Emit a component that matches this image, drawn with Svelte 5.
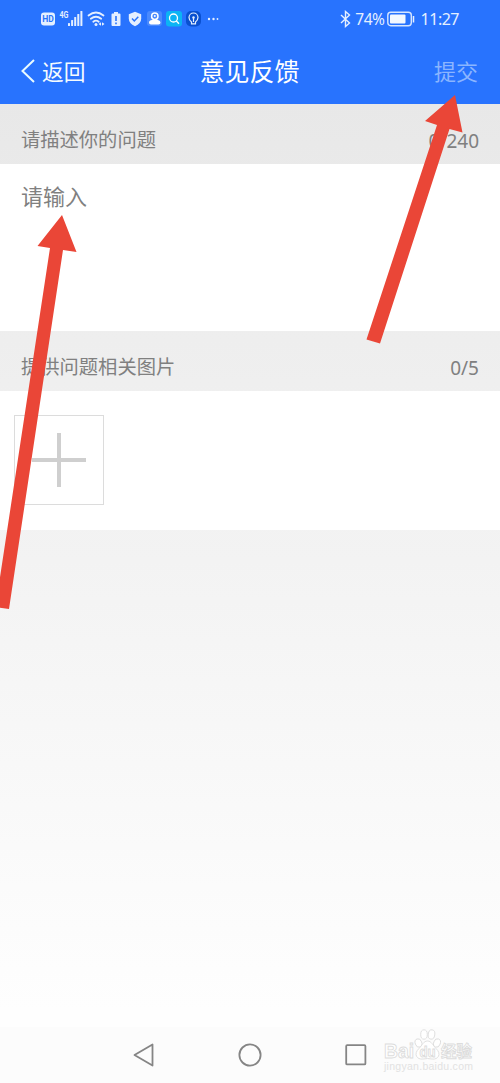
<script>
  let description = $state('');
  let photos = $state([]);

  const maxLength = 240;
  const maxPhotos = 5;
  const signalBars = [3, 6, 9, 12, 15];
</script>

<div class="screen">
  <header>
    <div class="status">
      <svg class="status-left" width="182" height="24" viewBox="0 0 182 24">
        <rect x="1" y="6.500" width="14" height="13" rx="3" fill="#e4efff" />
        <text x="8" y="16.300" class="hd">HD</text>
        <text x="19.500" y="11.500" class="net" textLength="9" lengthAdjust="spacingAndGlyphs">4G</text>
        {#each signalBars as h, i}
          <rect x={28 + i * 3.1} y={20 - h} width="2" height={h} rx="0.5" fill="#e4efff" />
        {/each}
        <g fill="none" stroke="#e4efff" stroke-width="1.800" stroke-linecap="round">
          <path d="M48.500 9.500Q56 3.500 63.500 9.500" />
          <path d="M50.800 12.800Q56 8.700 61.200 12.800" />
          <path d="M53.300 15.700Q56 13.700 58.700 15.700" />
        </g>
        <circle cx="56" cy="18.500" r="1.500" fill="#e4efff" />
        <path d="M58.500 18l2.500-1.800v3.600zM64.500 18l-2.500-1.800v3.600z" fill="#e4efff" />
        <path d="M74 6h4v1.500h1.500q1 0 1 1V19q0 1-1 1h-7q-1 0-1-1V8.500q0-1 1-1H74z" fill="#e4efff" />
        <path d="M76 10v5M76 16.500v1.700" stroke="#2873fb" stroke-width="1.600" />
        <path d="M95 5.800l6.200 2.400v4.300q0 5-6.200 7.800q-6.200-2.800-6.200-7.800V8.200z" fill="#e4efff" />
        <path d="M92 12.500l2.300 2.400 4-4.200" fill="none" stroke="#2873fb" stroke-width="1.500" />
        <rect x="107" y="5" width="15" height="15" rx="3" fill="#4a8afd" />
        <circle cx="114.800" cy="10.200" r="3.200" fill="none" stroke="#fff" stroke-width="1.500" />
        <circle cx="114.800" cy="10" r="1" fill="#fff" />
        <path d="M111 18.500q-2 0-2-2t3-2.500l3-1 3 1q2.500.5 2.500 2.500t-2 2z" fill="#fff" />
        <rect x="126" y="5" width="16" height="15.500" rx="3" fill="#0cb4f4" />
        <circle cx="133.500" cy="12" r="4" fill="none" stroke="#fff" stroke-width="1.300" />
        <path d="M136.400 15l2.600 2.700" stroke="#fff" stroke-width="1.300" />
        <rect x="146" y="5" width="15" height="15.500" rx="5" fill="#0950d0" />
        <path d="M151.500 16q-2.500-2-2.500-4.500a4.500 4.500 0 0 1 9 0q0 2.500-2.500 4.500v1.800h-4zM153.500 16v-4.500" fill="none" stroke="#e4efff" stroke-width="1.200" />
        <circle cx="153.500" cy="11.500" r="1.200" fill="#e4efff" />
        <g fill="#e4efff">
          <circle cx="169" cy="13" r="1.200" />
          <circle cx="173.500" cy="13" r="1.200" />
          <circle cx="177.500" cy="13" r="0.900" />
        </g>
      </svg>
      <div class="status-right">
        <svg width="14" height="18" viewBox="0 0 14 18">
          <path d="M1 5l8.500 8-4 3.500V1.500l4 3.500L1 13" fill="none" stroke="#e4efff" stroke-width="1.400" />
        </svg>
        <span class="percent">74%</span>
        <svg class="battery" width="28" height="16" viewBox="0 0 28 16">
          <rect x="0.800" y="1.300" width="23.500" height="13.400" rx="3" fill="none" stroke="#d5e5ff" stroke-width="1.400" />
          <rect x="3" y="3.500" width="15.500" height="9" rx="1" fill="#f3f8ff" />
          <path d="M26.500 5v6.500" stroke="#e4efff" stroke-width="1.500" />
        </svg>
        <span class="time">11:27</span>
      </div>
    </div>
    <nav>
      <button class="back">
        <svg width="14" height="24" viewBox="0 0 14 24">
          <path d="M13 1L1.500 12 13 23" fill="none" stroke="#e9fbff" stroke-width="2" />
        </svg>
        <span>返回</span>
      </button>
      <h1>意见反馈</h1>
      <button class="submit" disabled={!description}>提交</button>
    </nav>
  </header>

  <main>
    <div class="label">
      <span>请描述你的问题</span>
      <span class="count">{description.length}/{maxLength}</span>
    </div>
    <textarea bind:value={description} maxlength={maxLength} placeholder="请输入"></textarea>
    <div class="label">
      <span>提供问题相关图片</span>
      <span class="count">{photos.length}/{maxPhotos}</span>
    </div>
    <div class="photos">
      <button class="add" aria-label="添加图片">
        <svg width="54" height="54" viewBox="0 0 54 54">
          <path d="M27 0v54M0 27h54" stroke="#cfcfcf" stroke-width="4" />
        </svg>
      </button>
    </div>
  </main>

  <footer>
    <svg width="22" height="24" viewBox="0 0 22 24">
      <path d="M19.500 1.500v21L1.500 12z" fill="none" stroke="#858585" stroke-width="1.800" stroke-linejoin="round" />
    </svg>
    <svg width="24" height="24" viewBox="0 0 24 24">
      <circle cx="12" cy="12" r="10.600" fill="none" stroke="#858585" stroke-width="1.800" />
    </svg>
    <svg width="22" height="22" viewBox="0 0 22 22">
      <rect x="1.200" y="1.200" width="19.200" height="19.200" rx="1" fill="none" stroke="#858585" stroke-width="1.800" />
    </svg>
  </footer>

  <svg class="watermark" width="100" height="52" viewBox="0 0 100 52">
    <g fill="#fff" stroke="#dcdcdc" stroke-width="0.900">
      <ellipse cx="37.500" cy="18" rx="3.300" ry="4.300" transform="rotate(-20 37.500 18)" />
      <ellipse cx="43" cy="9.500" rx="3.300" ry="4.700" />
      <ellipse cx="50.500" cy="9.500" rx="3.300" ry="4.700" transform="rotate(8 50.500 9.500)" />
      <ellipse cx="56" cy="18" rx="3.300" ry="4.300" transform="rotate(20 56 18)" />
      <path d="M46.500 16c4 0 5.500 4.500 8.500 7.500 6 5.500 2 11.500-4 10.500q-4.500-1-9 0c-6 1-10-5-4-10.500 3-3 4.500-7.500 8.500-7.500z" />
      <text x="3" y="33" class="brand" textLength="30" lengthAdjust="spacingAndGlyphs">Bai</text>
      <text x="38.500" y="31.500" class="du" textLength="16" lengthAdjust="spacingAndGlyphs">du</text>
      <text x="60" y="32" class="cn" textLength="31">经验</text>
    </g>
    <text x="3" y="45" class="url" textLength="89">jingyan.baidu.com</text>
  </svg>

  <svg class="arrows" width="500" height="1083" viewBox="0 0 500 1083">
    <path d="M62 215L76.500 252 63 250 9 609-4.500 607 50 248 37.500 246z" />
    <path d="M455 95L462.500 132.500 449.500 129 380 343.500 366.500 339.500 437 125 425 121z" />
  </svg>
</div>

<style>
  :global(body) { overflow: hidden; }
  .screen {
    position: relative;
    display: flex;
    flex-direction: column;
    height: 1083px;
    font-family: Roboto, "Noto Sans CJK SC", sans-serif;
    color: #808080;
    background: linear-gradient(#e8e8e8 104px, #eeeeee 340px, #f3f3f3 560px, #fefefe 1010px);
  }
  button { border: 0; padding: 0; background: none; font: inherit; color: inherit; }
  svg { display: block; flex: none; }

  header { height: 104px; background: #2873fe; color: #fff; }
  .status { display: flex; justify-content: space-between; height: 38px; padding: 6px 41px 0 40px; box-sizing: border-box; }
  .hd { font: bold 8.5px Roboto, sans-serif; fill: #2873fb; text-anchor: middle; }
  .net { font: bold 8.5px Roboto, sans-serif; fill: #e4efff; }
  .status-right { display: flex; align-items: center; height: 26px; font: 16px/26px "Noto Sans", sans-serif; color: #e4efff; }
  .percent { margin-left: 1px; font-size: 15.5px; letter-spacing: -0.4px; }
  .battery { margin-left: 2px; }
  .time { margin-left: 6px; letter-spacing: -0.5px; }
  nav { display: grid; grid-template-columns: 1fr auto 1fr; align-items: center; height: 66px; padding: 0 22px 0 21px; }
  .back { display: flex; align-items: center; gap: 7px; font-size: 21.7px; color: #f4fbff; }
  .back span, .submit { padding-bottom: 2px; }
  h1 { margin: 0; padding-top: 3px; font-size: 25px; font-weight: 400; line-height: 36px; }
  .submit { justify-self: end; font-size: 22px; color: #8bb5ff; }

  .label { display: flex; justify-content: space-between; height: 60px; padding: 7px 21px 0; box-sizing: border-box; font-size: 19.3px; line-height: 60px; }
  .count { font-family: "Noto Sans", sans-serif; font-size: 19px; }
  textarea {
    display: block;
    width: 100%;
    height: 167px;
    padding: 17px 21px;
    box-sizing: border-box;
    border: 0;
    outline: 0;
    resize: none;
    background: #fff;
    font: 22px/33px Roboto, "Noto Sans CJK SC", sans-serif;
  }
  textarea::placeholder { color: #808080; opacity: 1; }
  .photos { height: 139px; padding: 24px 14px; box-sizing: border-box; background: #fff; }
  .add { display: grid; place-items: center; width: 90px; height: 90px; box-sizing: border-box; border: 1px solid #dcdcdc; }

  footer { display: flex; align-items: center; justify-content: space-between; height: 56px; margin-top: auto; padding: 0 133px; background: #fcfcfc; }

  .watermark { position: absolute; left: 381px; top: 1025px; }
  .brand { font: bold 20px "Liberation Sans", sans-serif; }
  .du { font: bold 14px "Liberation Sans", sans-serif; }
  .cn { font: bold 15.5px "Noto Sans CJK SC", sans-serif; }
  .url { font: 10.5px "Liberation Sans", sans-serif; fill: #e2e2e2; }
  .arrows { position: absolute; left: 0; top: 0; fill: #ea4637; pointer-events: none; }
</style>
